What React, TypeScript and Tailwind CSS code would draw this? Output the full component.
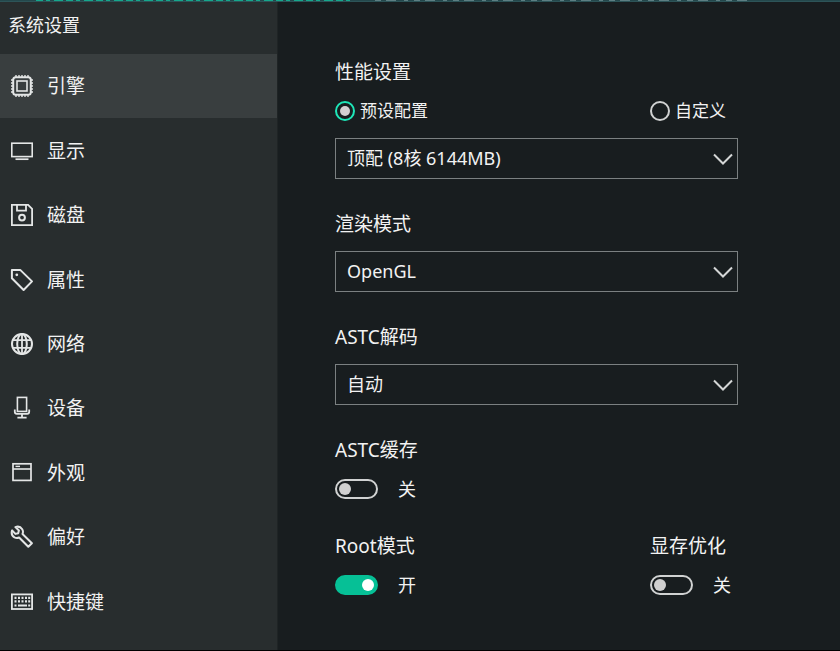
import { useId, useState } from "react";
import type { ReactNode } from "react";

type MenuItem = {
    label: string;
    icon: ReactNode;
};

const Icon = ({ children }: { children: ReactNode }) => (
    <svg className="size-6 shrink-0 text-[#e4e6e6]" viewBox="0 0 24 24" fill="none" stroke="currentColor" strokeWidth="2" aria-hidden="true">
        {children}
    </svg>
);

const menu: MenuItem[] = [
    {
        label: "引擎",
        icon: (
            <Icon>
                <rect x="3.2" y="3.2" width="17.6" height="17.6" rx="2.5" />
                <rect x="7" y="7" width="10" height="10" strokeWidth="1.6" />
                <path d="M6 1v2M9 1v2M12 1v2M15 1v2M18 1v2M6 21v2M9 21v2M12 21v2M15 21v2M18 21v2M1 6h2M1 9h2M1 12h2M1 15h2M1 18h2M21 6h2M21 9h2M21 12h2M21 15h2M21 18h2" strokeWidth="1.4" />
            </Icon>
        ),
    },
    {
        label: "显示",
        icon: (
            <Icon>
                <rect x="1.8" y="4.2" width="20.4" height="13.4" strokeWidth="1.6" />
                <path d="M5.5 20.2h13" strokeWidth="1.7" />
            </Icon>
        ),
    },
    {
        label: "磁盘",
        icon: (
            <Icon>
                <path d="M1.9 1.9h16.2l4 4v16.2H1.9z" strokeWidth="1.8" />
                <path d="M7 2v5.6h9V2" strokeWidth="1.8" />
                <circle cx="12" cy="14.6" r="2.9" />
            </Icon>
        ),
    },
    {
        label: "属性",
        icon: (
            <Icon>
                <path d="M1.9 1.9h8.3L22 13.4l-8.4 8.6L1.9 10.2z" strokeLinejoin="round" />
                <circle cx="6.8" cy="6.8" r="1.4" fill="currentColor" stroke="none" />
            </Icon>
        ),
    },
    {
        label: "网络",
        icon: (
            <Icon>
                <circle cx="12" cy="12" r="10" />
                <ellipse cx="12" cy="12" rx="4.8" ry="10" />
                <path d="M12 2v20M2.8 8.2h18.4M2.8 15.8h18.4" strokeWidth="1.8" />
            </Icon>
        ),
    },
    {
        label: "设备",
        icon: (
            <Icon>
                <rect x="7.4" y="1.4" width="9.2" height="14" strokeWidth="1.6" />
                <path d="M4.8 13.6v2.2q0 2 2 2h10.4q2 0 2-2v-2.2M12 17.8v4M7.4 21.6h9.2" strokeWidth="1.8" />
            </Icon>
        ),
    },
    {
        label: "外观",
        icon: (
            <Icon>
                <rect x="3" y="2.8" width="18" height="16.6" strokeWidth="1.7" />
                <path d="M3 8h18" strokeWidth="1.6" />
                <path d="M5.5 5.4h4.5" strokeWidth="1.4" />
            </Icon>
        ),
    },
    {
        label: "偏好",
        icon: (
            <Icon>
                <path d="M5.4 2.1l3.5 3.3-.7 2.8-2.8.7-3.3-3.5c-1 3 .1 5.6 2.4 6.9 1.5.8 3.1.8 4.6.2l9.2 9.3 3.6-3.6-9.4-9.2c.7-1.7.6-3.4-.3-4.8-1.5-2.3-4.1-3.1-6.8-2.1z" strokeLinejoin="round" />
            </Icon>
        ),
    },
    {
        label: "快捷键",
        icon: (
            <Icon>
                <rect x="1.9" y="4.4" width="20.2" height="14.6" strokeWidth="1.8" />
                <path d="M4.5 7.8h2M8 7.8h2M11.5 7.8h2M15 7.8h2M18.2 7.8h2M4.5 11.3h2M8 11.3h2M11.5 11.3h2M15 11.3h2M18.2 11.3h2" strokeWidth="2.2" />
                <path d="M4.5 15.4h2M8 15.4h9M18.2 15.4h2" strokeWidth="2" />
            </Icon>
        ),
    },
];

const SelectField = ({ label, options, children }: { label: string; options: string[]; children?: ReactNode }) => {
    const id = useId();
    return (
        <section className="flex flex-col">
            <label htmlFor={id} className="text-[19px] leading-7">{label}</label>
            {children}
            <div className="mt-[13px] grid items-center">
                <select id={id} className="col-start-1 row-start-1 h-[41px] w-full appearance-none border border-[#7b8081] bg-transparent pr-10 pl-[11px] text-[18px] outline-none">
                    {options.map((option) => (
                        <option key={option} className="bg-[#181d1f]">{option}</option>
                    ))}
                </select>
                <svg className="pointer-events-none col-start-1 row-start-1 mr-[5px] h-3 w-5 justify-self-end" viewBox="0 0 20 12" fill="none" stroke="#d4d6d6" strokeWidth="2" aria-hidden="true">
                    <path d="M1 1.5l9 9 9-9" />
                </svg>
            </div>
        </section>
    );
};

const Radio = ({ label, checked, onChange }: { label: string; checked: boolean; onChange: () => void }) => (
    <label className="flex items-center gap-[5px] text-[17px] leading-7 whitespace-nowrap">
        <input
            type="radio"
            name="performance"
            checked={checked}
            onChange={onChange}
            className="grid size-5 shrink-0 appearance-none place-items-center rounded-full border-2 border-[#d0d2d2] before:size-[10px] before:rounded-full checked:border-[#1ee6b8] checked:before:bg-[#d4d0d2]"
        />
        {label}
    </label>
);

const Toggle = ({ label, defaultOn = false }: { label: string; defaultOn?: boolean }) => {
    const id = useId();
    const [on, setOn] = useState(defaultOn);
    return (
        <section className="flex flex-col gap-[11px]">
            <label htmlFor={id} className="text-[19px] leading-7 whitespace-nowrap">{label}</label>
            <div className="flex items-center gap-5 text-[18px] leading-7">
                <input
                    id={id}
                    type="checkbox"
                    role="switch"
                    checked={on}
                    onChange={() => setOn(!on)}
                    className="flex h-5 w-[43px] shrink-0 appearance-none items-center rounded-full border-2 border-[#d0d2d2] px-[2px] before:size-3 before:rounded-full before:bg-[#d0d0d0] checked:justify-end checked:border-[#06c096] checked:bg-[#06c096] checked:before:bg-white"
                />
                <span>{on ? "开" : "关"}</span>
            </div>
        </section>
    );
};

export default function App() {
    const [active, setActive] = useState("引擎");
    const [mode, setMode] = useState("preset");

    return (
        <div className="flex min-h-screen flex-col border-b border-black bg-[#181d1f] font-['Noto_Sans','Noto_Sans_CJK_SC',sans-serif] text-[#f2f2f2]">
            {/* sliver of the window behind the dialog */}
            <svg className="h-[2px] w-full bg-[#24484c]" aria-hidden="true">
                <path d="M36 0.5H350" stroke="#15a88c" strokeDasharray="7 3 4 4 9 3" />
                <path d="M375 0.5H750" stroke="#5d7f83" strokeDasharray="6 5 10 8 4 6" />
                <path d="M0 1.5H2000" stroke="#2d5458" />
            </svg>
            <div className="flex flex-1">
                <aside className="flex w-[278px] shrink-0 flex-col border-r border-[#1f2425] bg-[#282d2e] pb-4">
                    <h1 className="h-[52px] px-2 pt-[9px] text-[18px] leading-7">系统设置</h1>
                    <nav className="flex flex-1 flex-col">
                        {menu.map(({ label, icon }) => (
                            <button
                                key={label}
                                type="button"
                                onClick={() => setActive(label)}
                                className={`flex min-h-16 flex-1 items-center gap-[13px] px-[10px] text-[19px] leading-7 ${active === label ? "bg-[#393e3f]" : ""}`}
                            >
                                {icon}
                                {label}
                            </button>
                        ))}
                    </nav>
                </aside>
                <main className="flex min-w-0 flex-1 flex-col pt-14 pr-[102px] pl-[57px]">
                    <div className="flex flex-col gap-[31px]">
                        <SelectField label="性能设置" options={["顶配 (8核 6144MB)", "高配 (4核 4096MB)", "中配 (2核 2048MB)"]}>
                            <div className="mt-[11px] grid grid-cols-[1fr_88px]">
                                <Radio label="预设配置" checked={mode === "preset"} onChange={() => setMode("preset")} />
                                <Radio label="自定义" checked={mode === "custom"} onChange={() => setMode("custom")} />
                            </div>
                        </SelectField>
                        <SelectField label="渲染模式" options={["OpenGL", "DirectX"]} />
                        <SelectField label="ASTC解码" options={["自动", "关闭"]} />
                        <Toggle label="ASTC缓存" />
                    </div>
                    <div className="mt-[29px] grid grid-cols-[1fr_88px]">
                        <Toggle label="Root模式" defaultOn />
                        <Toggle label="显存优化" />
                    </div>
                </main>
            </div>
        </div>
    );
}
